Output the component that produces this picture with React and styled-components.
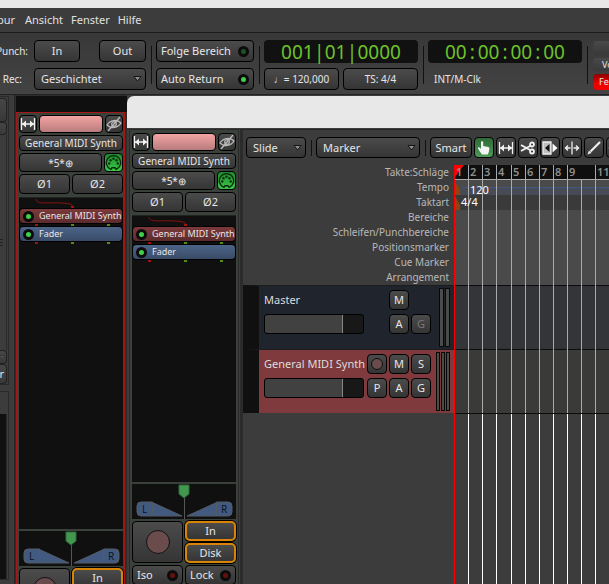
import React from "react";
import styled, { createGlobalStyle, css } from "styled-components";

const GlobalStyle = createGlobalStyle`
  * {
    box-sizing: border-box;
  }

  body {
    margin: 0;
    overflow: hidden;
    background: #3c3c3c;
    color: #e6e6e6;
    font-family: "Noto Sans", "Open Sans", sans-serif;
    font-size: 11px;
    line-height: 14px;
  }

  button,
  select {
    margin: 0;
    padding: 0;
    font: inherit;
    color: inherit;
  }
`;

const raised = css`
  border: 1px solid #000;
  border-radius: 4px;
  background: linear-gradient(#4c4b4c, #363536);
`;

const Screen = styled.div`
  position: relative;
  display: flex;
  flex-direction: column;
  height: 100vh;
  overflow: hidden;
`;

const TitleStrip = styled.div`
  flex: none;
  height: 8px;
  background: #e8e8e8;
`;

const MenuBar = styled.nav`
  flex: none;
  display: flex;
  gap: 8px;
  height: 25px;
  align-items: center;
  border-bottom: 1px solid #1c1c1c;
`;

const MenuItem = styled.a`
  color: #e0e0e0;
  text-decoration: none;
`;

const ClippedMenu = styled.div`
  display: flex;
  justify-content: flex-end;
  width: 17px;
  padding-right: 2px;
`;

const Transport = styled.header`
  flex: none;
  display: flex;
  gap: 4px;
  height: 62px;
  padding: 7px 0 4px;
  border-bottom: 1px solid #222;
  background: linear-gradient(#383838, #434343);
`;

const Stack = styled.div`
  flex: none;
  display: flex;
  flex-direction: column;
  justify-content: space-between;
  width: ${(p) => p.$width}px;
`;

const Line = styled.div`
  display: flex;
  justify-content: space-between;
  align-items: center;
  gap: 4px;
  height: 22px;
`;

const Caption = styled.div`
  display: flex;
  align-items: center;
  justify-content: flex-end;
  height: 22px;
  padding-right: ${(p) => p.$inset}px;
  font-size: 10px;
`;

const SourceLabel = styled.div`
  height: 22px;
  padding-left: 6px;
  font-size: 10px;
  line-height: 22px;
`;

const Divider = styled.div`
  flex: none;
  align-self: center;
  width: 1px;
  height: ${(p) => p.$height || 38}px;
  margin-left: 1px;
  background: #111;
`;

const Button = styled.button`
  ${raised}
  display: flex;
  align-items: center;
  justify-content: ${(p) => p.$justify || "center"};
  flex: ${(p) => (p.$width ? "none" : 1)};
  width: ${(p) => (p.$width ? `${p.$width}px` : "auto")};
  height: ${(p) => p.$height || 22}px;
  padding: 0 ${(p) => p.$pad || 0}px;
  overflow: hidden;
  white-space: nowrap;
  font-size: ${(p) => p.$size || 11}px;
  ${(p) =>
    p.$active &&
    css`
      background: linear-gradient(#2f6a38, #4b9a55);
    `}
  ${(p) =>
    p.$lit &&
    css`
      background: linear-gradient(#1f8a2c, #3cc84a);
    `}
  &:disabled {
    color: #777;
  }
`;

const SelectBox = styled.label`
  ${raised}
  position: relative;
  flex: none;
  display: block;
  width: ${(p) => (p.$width ? `${p.$width}px` : "100%")};
  height: ${(p) => p.$height || 22}px;

  select {
    display: block;
    width: 100%;
    height: 100%;
    padding: 0 6px;
    border: 0;
    appearance: none;
    background: transparent;
  }

  svg {
    position: absolute;
    right: 3px;
    top: 50%;
    margin-top: -3px;
    pointer-events: none;
  }
`;

const Led = styled.span`
  flex: none;
  width: 11px;
  height: 11px;
  border: 3px solid #0c0c0c;
  border-radius: 50%;
  background: ${(p) => p.$color};
`;

const Clock = styled.div`
  display: flex;
  align-items: center;
  justify-content: center;
  height: 23px;
  border-radius: 4px;
  background: #111;
  color: #6cc22c;
  font-size: 19px;
  line-height: 22px;
`;

const ClockMark = styled.span`
  width: 11px;
  text-align: center;
`;

const EdgeButtons = styled.div`
  flex: 1;
  display: flex;
  flex-direction: column;
  gap: 3px;
  padding: 1px 0 0 1px;
`;

const EdgeButton = styled.button`
  height: ${(p) => p.$height}px;
  padding-left: ${(p) => p.$inset}px;
  overflow: hidden;
  border: 0;
  border-radius: 4px 0 0 4px;
  background: ${(p) =>
    p.$alert
      ? "linear-gradient(#8d0000, #f00000 60%)"
      : "linear-gradient(#4a494a, #3a393a)"};
  text-align: left;
  font-size: 9px;
  line-height: ${(p) => p.$height}px;
`;

const Workspace = styled.main`
  flex: 1;
  display: flex;
  min-height: 0;
`;

const SidePanel = styled.aside`
  flex: none;
  display: flex;
  flex-direction: column;
  gap: 6px;
  width: 15px;
  padding: 1px 5px 4px 0;
  border-right: 1px solid #262626;
`;

const SideGroup = styled.div`
  flex: ${(p) => (p.$grow ? "1" : "none")};
  display: flex;
  flex-direction: column;
  height: ${(p) => (p.$grow ? "auto" : `${p.$height}px`)};
  padding: 1px 1px 0 0;
  border: 1px solid #2a2a2a;
  border-left: 0;
`;

const SideButton = styled.button`
  flex: none;
  display: flex;
  justify-content: flex-end;
  align-items: center;
  height: ${(p) => p.$height}px;
  padding-right: 2px;
  overflow: hidden;
  border: 1px solid #222;
  border-left: 0;
  border-radius: 0 4px 4px 0;
  background: linear-gradient(#464646, #393939);
`;

const SideFill = styled.div`
  flex: 1;
  display: flex;
  align-items: center;
  margin-top: ${(p) => p.$top || 0}px;
  border-right: 1px solid #2a2a2a;
  background: ${(p) => p.$color || "transparent"};
`;

const MixerPane = styled.section`
  flex: none;
  display: flex;
  flex-direction: column;
  width: 112px;
  margin-bottom: -47px;
  padding: 1px 0 0 1px;
  background: #2c2e2c;
`;

const MixerGap = styled.div`
  flex: none;
  height: 16px;
  background: #0f0f0f;
`;

const StripSlot = styled.div`
  flex: 1;
  display: flex;
  min-height: 0;
`;

const Strip = styled.article`
  flex: none;
  display: flex;
  flex-direction: column;
  gap: 2px;
  min-height: 0;
  width: ${(p) => (p.$selected ? 109 : 110)}px;
  padding: ${(p) => (p.$selected ? "2px 1px 0 2px" : "3px 2px 0")};
  border: 1px solid ${(p) => (p.$selected ? "#a51616" : "#2a2a2a")};
  border-bottom: 0;
  background: #3a403a;
`;

const StripRow = styled.div`
  flex: none;
  display: flex;
  gap: 2px;
`;

const StripColor = styled.div`
  flex: 1;
  border: 1px solid #000;
  border-radius: 4px;
  background: linear-gradient(#f4a3a3, #b87c7c);
`;

const Processors = styled.div`
  flex: 1;
  min-height: 0;
  margin-top: 1px;
  overflow: hidden;
  border-top: 1px solid #222;
  background: #101010;
`;

const Wire = styled.svg`
  display: block;
`;

const Processor = styled.div`
  display: flex;
  align-items: center;
  gap: 5px;
  height: 16px;
  padding-left: 3px;
  border: 1px solid #000;
  border-radius: 4px;
  background: ${(p) => p.$fill};
  white-space: nowrap;
  font-size: 9px;
`;

const Pins = styled.div`
  display: flex;
  justify-content: space-between;
  height: 2px;
  padding: 0 13px 0 16px;
`;

const Pin = styled.span`
  width: 3px;
  background: ${(p) => p.$color};
`;

const Panner = styled.svg`
  flex: none;
  display: block;
  background: #101010;
  font-size: 10px;
`;

const StripControls = styled.div`
  flex: none;
  display: grid;
  grid-template-columns: 51px 51px;
  gap: 2px;
  height: 63px;
`;

const RecordButton = styled.button`
  ${raised}
  grid-row: span 2;
  display: flex;
  align-items: center;
  justify-content: center;
  height: 42px;
`;

const RecordDot = styled.span`
  width: ${(p) => p.$size}px;
  height: ${(p) => p.$size}px;
  border: 1px solid #111;
  border-radius: 50%;
  background: #6a4c4d;
`;

const MonitorButton = styled.button`
  height: 20px;
  border: 2px solid #d98405;
  border-radius: 5px;
  box-shadow: 0 0 0 1px #000;
  background: linear-gradient(#4c4b4c, #363536);
`;

const EditorWindow = styled.section`
  position: absolute;
  top: 96px;
  right: 0;
  bottom: 0;
  left: 127px;
  display: flex;
  flex-direction: column;
  overflow: hidden;
  border-radius: 7px 0 0 0;
  background: #3c3c3c;
`;

const WindowTitle = styled.div`
  flex: none;
  height: 32px;
  background: #e8e8e8;
`;

const WindowBody = styled.div`
  flex: 1;
  display: flex;
  min-height: 0;
  padding: 1px 0 0 2px;
`;

const Editor = styled.div`
  flex: 1;
  display: flex;
  flex-direction: column;
  min-width: 0;
  margin-left: 1px;
  border-left: 3px solid #2b2b2b;
`;

const Tools = styled.div`
  flex: none;
  display: flex;
  gap: 2px;
  height: 36px;
  padding: 7px 0 7px 3px;
  border-top: 1px solid #262626;
`;

const ToolGap = styled.div`
  flex: none;
  display: flex;
  justify-content: center;
  width: 6px;
`;

const Timeline = styled.div`
  flex: 1;
  display: flex;
  min-height: 0;
`;

const HeaderColumn = styled.div`
  flex: none;
  width: 211px;
`;

const RulerLabel = styled.div`
  height: 15px;
  padding-right: 5px;
  text-align: right;
  color: #b8b8b8;
  font-size: 10px;
  line-height: 15px;
`;

const Track = styled.div`
  display: flex;
  height: 64px;
  padding: 4px 4px 0 5px;
  border-top: 1px solid #1c1c1c;
  border-left: 16px solid #101010;
  background: ${(p) => p.$color};
`;

const TrackBody = styled.div`
  flex: 1;
  display: flex;
  flex-direction: column;
  gap: 4px;
`;

const TrackRow = styled.div`
  display: flex;
  gap: 2px;
  height: 20px;
`;

const TrackName = styled.div`
  flex: none;
  width: 101px;
  color: #dcdcdc;
  line-height: 20px;
  white-space: nowrap;
`;

const TrackFader = styled.div`
  flex: none;
  width: 100px;
  margin-right: 1px;
  border: 1px solid #000;
  border-radius: 3px;
  background: linear-gradient(
    to right,
    #414141 77px,
    #888 77px,
    #888 78px,
    #181818 78px
  );
`;

const Blank = styled.span`
  width: 20px;
`;

const Meters = styled.div`
  display: flex;
  gap: 1px;
  height: 59px;
  margin-top: -2px;
`;

const Meter = styled.span`
  width: ${(p) => p.$width}px;
  border: 1px solid #080808;
  background: #4b4b48;
`;

const Canvas = styled.div`
  position: relative;
  flex: 1;
  min-width: 0;
  overflow: hidden;
  border-left: 1px solid #f00;
  background: #3c3c3c;
`;

const Lane = styled.div`
  height: ${(p) => p.$height}px;
  background: ${(p) => p.$color};
  border-top: ${(p) => (p.$ruled ? "1px solid #0c0c0c" : "0")};
`;

const TempoLane = styled(Lane)`
  padding: 7px 0 0 7px;

  &::after {
    content: "";
    display: block;
    height: 8px;
    border-top: 1px solid #43587d;
    background: #474b55;
  }
`;

const BarNumbers = styled.div`
  display: flex;
  height: 15px;
  border-bottom: 1px solid #aaa;
  background: #0f0f0f;
`;

const GridLines = styled.div`
  position: absolute;
  top: ${(p) => p.$top}px;
  bottom: ${(p) => (p.$height ? "auto" : 0)};
  height: ${(p) => (p.$height ? `${p.$height}px` : "auto")};
  display: flex;
`;

const Bar = styled.div`
  position: relative;
  z-index: 1;
  flex: none;
  width: 14px;
  padding-left: 1px;
  border-right: 1px solid ${(p) => p.$line};
  color: #8e8e8e;
  font-weight: 600;
  line-height: 14px;
  white-space: nowrap;

  &:nth-child(4) {
    width: 15px;
  }
`;

const Flag = styled.div`
  position: absolute;
  z-index: 2;
  top: ${(p) => p.$top}px;
  left: ${(p) => p.$left}px;
  color: #fff;
  line-height: 14px;
`;

const Marks = styled.svg`
  position: absolute;
  top: 0;
  left: 0;
`;

const Caret = () => (
  <svg width="9" height="6" viewBox="0 0 9 6" aria-hidden="true">
    <path d="M1 .5h7L4.500 5z" fill="#8b8b8b" stroke="#151515" />
  </svg>
);

const Grip = () => (
  <svg width="4" height="8" viewBox="0 0 4 8" aria-hidden="true">
    <path d="M0 .5h3M0 3.500h3M0 6.500h3" stroke="#222" />
  </svg>
);

const Icon = ({ children, size = 16 }) => (
  <svg
    width={size}
    height={size}
    viewBox="0 0 16 16"
    fill="none"
    stroke="#f0f0f0"
    strokeWidth="1.300"
    aria-hidden="true"
  >
    {children}
  </svg>
);

const RangeIcon = () => (
  <Icon>
    <path d="M1.500 2v12M14.500 2v12M2 8h12" />
    <path d="M6 4.500v7L2 8zM10 4.500v7l4-3.500z" fill="#f0f0f0" stroke="none" />
  </Icon>
);

const HiddenIcon = () => (
  <Icon>
    <path d="M1 9c3-5 10-6 14-2-3 5-10 6-14 2zM14 1L2 15" stroke="#bbb" />
    <circle cx="8" cy="8" r="2.300" stroke="#bbb" />
  </Icon>
);

const MidiIcon = () => (
  <Icon size={18}>
    <path
      d="M5.500 14A6.700 6.700 0 1 1 10.500 14L9.500 12.500h-3z"
      stroke="#092d0c"
    />
    <g fill="#092d0c" stroke="none">
      <circle cx="4" cy="8.500" r="1.100" />
      <circle cx="5.200" cy="5.400" r="1.100" />
      <circle cx="8" cy="4" r="1.100" />
      <circle cx="10.800" cy="5.400" r="1.100" />
      <circle cx="12" cy="8.500" r="1.100" />
    </g>
  </Icon>
);

const HandIcon = () => (
  <Icon>
    <path
      d="M5 2.200c0-1.300 2.200-1.300 2.200 0V6l5 1c1 .3 1.300 1 1.200 2l-.6 3-1 2.500H6L3.500 11 2 8.500C1.600 7.300 3 6.800 3.800 7.800L5 9z"
      fill="#f4f4f4"
      stroke="none"
    />
  </Icon>
);

const CutIcon = () => (
  <Icon>
    <path d="M1 5l9 5M1 11l9-5" strokeWidth="2" />
    <circle cx="12" cy="4.500" r="2" strokeWidth="1.800" />
    <circle cx="12" cy="11.500" r="2" strokeWidth="1.800" />
  </Icon>
);

const AuditionIcon = () => (
  <Icon>
    <path d="M1 2h8v12H1z" fill="#bebebe" stroke="#eee" />
    <path d="M7.500 4v8L3 8z" fill="#111" stroke="none" />
    <path d="M10.500 3.500l5 4.500-5 4.500z" fill="#fff" stroke="none" />
  </Icon>
);

const StretchIcon = () => (
  <Icon>
    <path d="M8 1.500v13M1 8h5.500M9.500 8H15M4 5.500L1.500 8 4 10.500M12 5.500L14.500 8 12 10.500" />
  </Icon>
);

const DrawIcon = () => (
  <Icon>
    <path d="M4.500 11.500l9.500-9.500" strokeWidth="2.200" />
    <path d="M1.500 14.500l1.500-4 2.500 2.500z" fill="#f0f0f0" stroke="none" />
  </Icon>
);

const Dropdown = ({ label, value, width, height }) => (
  <SelectBox $width={width} $height={height}>
    <select aria-label={label} defaultValue={value}>
      <option>{value}</option>
    </select>
    <Caret />
  </SelectBox>
);

const PinRow = () => (
  <Pins>
    <Pin $color="#9c1414" />
    <Pin $color="#549010" />
    <Pin $color="#549010" />
  </Pins>
);

const SquareButton = (props) => <Button $width={20} $height={20} {...props} />;

function MixerStrip({ selected }) {
  return (
    <Strip $selected={selected}>
      <StripRow>
        <Button $width={18} $height={18} aria-label="Breite">
          <RangeIcon />
        </Button>
        <StripColor />
        <Button $width={18} $height={18} aria-label="Ausblenden">
          <HiddenIcon />
        </Button>
      </StripRow>
      <StripRow>
        <Button $height={16} $size={10}>
          General MIDI Synth
        </Button>
      </StripRow>
      <StripRow>
        <Button $height={19} $size={10}>
          *5*⊕
        </Button>
        <Button $width={19} $height={19} $lit aria-label="MIDI">
          <MidiIcon />
        </Button>
      </StripRow>
      <StripRow>
        <Button $height={20}>Ø1</Button>
        <Button $height={20}>Ø2</Button>
      </StripRow>
      <Processors>
        <Wire width="104" height="10" aria-hidden="true">
          <path
            d="M17 1C17 7 29 4 42 5q12 0 12 4"
            fill="none"
            stroke="#8c1010"
          />
          <path d="M52 8h3v2h-3z" fill="#9c1414" />
        </Wire>
        <Processor $fill="linear-gradient(#7c393b, #5c2b2d)">
          <Led $color="#3fd04b" />
          General MIDI Synth
        </Processor>
        <PinRow />
        <Processor $fill="linear-gradient(#4c6488, #394b67)">
          <Led $color="#3fd04b" />
          Fader
        </Processor>
        <PinRow />
      </Processors>
      <Panner width="104" height="35" viewBox="0 0 104 35">
        <g fill="#425a80" stroke="#555b62">
          <path d="M20.500 18v14H9q-4 0-4-4v-6q0-4 4-4zM20.500 18.500L50 32H20.500z" />
          <path d="M84.500 18v14H96q4 0 4-4v-6q0-4-4-4zM84.500 18.500L55 32H84.500z" />
        </g>
        <path d="M52.500 10v25" stroke="#555" />
        <path d="M47 1h10v9l-5 4-5-4z" fill="#43984f" stroke="#2d6a37" />
        <text x="10" y="29" fill="#0d1420">
          L
        </text>
        <text x="89" y="29" fill="#0d1420">
          R
        </text>
      </Panner>
      <StripControls>
        <RecordButton aria-label="Aufnahme">
          <RecordDot $size={24} />
        </RecordButton>
        <MonitorButton>In</MonitorButton>
        <MonitorButton>Disk</MonitorButton>
        <Button $height={20} $pad={4} $justify="space-between">
          Iso
          <Led $color="#651010" />
        </Button>
        <Button $height={20} $pad={4} $justify="space-between">
          Lock
          <Led $color="#651010" />
        </Button>
      </StripControls>
    </Strip>
  );
}

const rulers = [
  "Takte:Schläge",
  "Tempo",
  "Taktart",
  "Bereiche",
  "Schleifen/Punchbereiche",
  "Positionsmarker",
  "Cue Marker",
  "Arrangement",
];

// bar 10 has neither a number nor a tick in the ruler
const bars = [
  { label: "1", tick: true },
  { label: "2", tick: true },
  { label: "3", tick: true },
  { label: "4", tick: true },
  { label: "5", tick: true },
  { label: "6", tick: true },
  { label: "7", tick: true },
  { label: "8", tick: true },
  { label: "9", tick: false },
  { label: "", tick: true },
  { label: "11", tick: true },
];

const tools = [
  ["Greifen", HandIcon],
  ["Bereich", RangeIcon],
  ["Schneiden", CutIcon],
  ["Vorhören", AuditionIcon],
  ["Dehnen", StretchIcon],
  ["Zeichnen", DrawIcon],
  ["Bearbeiten", StretchIcon],
];

function TransportBar() {
  return (
    <Transport>
      <Stack $width={30}>
        <Caption $inset={2}>Punch:</Caption>
        <Caption $inset={8}>Rec:</Caption>
      </Stack>
      <Stack $width={112}>
        <Line>
          <Button $width={46}>In</Button>
          <Button $width={47}>Out</Button>
        </Line>
        <Dropdown label="Rec" value="Geschichtet" />
      </Stack>
      <Divider />
      <Stack $width={98}>
        <Line>
          <Button $pad={4} $justify="space-between">
            <span>Folge Bereich</span>
            <Led $color="#1c5222" />
          </Button>
        </Line>
        <Line>
          <Button $pad={4} $justify="space-between">
            <span>Auto Return</span>
            <Led $color="#3fd04b" />
          </Button>
        </Line>
      </Stack>
      <Divider />
      <Stack $width={154}>
        <Clock>
          001<ClockMark>|</ClockMark>01<ClockMark>|</ClockMark>0000
        </Clock>
        <Line>
          <Button $size={10}>♩= 120,000</Button>
          <Button $size={10}>TS: 4/4</Button>
        </Line>
      </Stack>
      <Divider />
      <Stack $width={154}>
        <Clock>
          00<ClockMark>:</ClockMark>00<ClockMark>:</ClockMark>00
          <ClockMark>:</ClockMark>00
        </Clock>
        <SourceLabel>INT/M-Clk</SourceLabel>
      </Stack>
      <Divider />
      <EdgeButtons>
        <EdgeButton $height={14} $inset={9} aria-label="Solo" />
        <EdgeButton $height={14} $inset={9}>
          Vo
        </EdgeButton>
        <EdgeButton $height={16} $inset={6} $alert>
          Fe
        </EdgeButton>
      </EdgeButtons>
    </Transport>
  );
}

function TrackHeaders() {
  return (
    <HeaderColumn>
      {rulers.map((name) => (
        <RulerLabel key={name}>{name}</RulerLabel>
      ))}
      <Track $color="#20242c">
        <TrackBody>
          <TrackRow>
            <TrackName>Master</TrackName>
            <Blank />
            <SquareButton>M</SquareButton>
          </TrackRow>
          <TrackRow>
            <TrackFader />
            <Blank />
            <SquareButton>A</SquareButton>
            <SquareButton disabled>G</SquareButton>
          </TrackRow>
        </TrackBody>
        <Meters>
          <Meter $width={5} />
          <Meter $width={5} />
        </Meters>
      </Track>
      <Track $color="#7e3a3c">
        <TrackBody>
          <TrackRow>
            <TrackName>General MIDI Synth</TrackName>
            <SquareButton aria-label="Aufnahme">
              <RecordDot $size={12} />
            </SquareButton>
            <SquareButton>M</SquareButton>
            <SquareButton>S</SquareButton>
          </TrackRow>
          <TrackRow>
            <TrackFader />
            <SquareButton>P</SquareButton>
            <SquareButton>A</SquareButton>
            <SquareButton>G</SquareButton>
          </TrackRow>
        </TrackBody>
        <Meters>
          <Meter $width={4} />
          <Meter $width={4} />
          <Meter $width={4} />
        </Meters>
      </Track>
    </HeaderColumn>
  );
}

function TimelineCanvas() {
  return (
    <Canvas>
      <BarNumbers>
        {bars.map((bar, i) => (
          <Bar key={i} $line={bar.tick ? "#aaa" : "transparent"}>
            {bar.label}
          </Bar>
        ))}
      </BarNumbers>
      <TempoLane $height={15} $color="#4a4a4a" />
      <Lane $height={15} $color="#3a3a3a" />
      <Lane $height={75} $color="#4a4a4a" />
      <Lane $height={64} $color="#343538" $ruled />
      <Lane $height={64} $color="#3a3a38" $ruled />
      <Lane $height={1} $color="#0c0c0c" />
      <GridLines $top={15} $height={233}>
        {bars.map((bar, i) => (
          <Bar key={i} $line="#aaa" />
        ))}
      </GridLines>
      <GridLines $top={249}>
        {bars.map((bar, i) => (
          <Bar key={i} $line="#fff" />
        ))}
      </GridLines>
      <Marks width="12" height="46" aria-hidden="true">
        <path d="M0 0h9L0 12z" fill="#f00" />
        <path d="M0 16l5 9v5H0zM0 31l5 9v5H0z" fill="#91420d" />
      </Marks>
      <Flag $top={18} $left={15}>
        120
      </Flag>
      <Flag $top={30} $left={6}>
        4/4
      </Flag>
    </Canvas>
  );
}

export default function App() {
  return (
    <Screen>
      <GlobalStyle />
      <TitleStrip />
      <MenuBar>
        <ClippedMenu>
          <MenuItem href="#spur">Spur</MenuItem>
        </ClippedMenu>
        <MenuItem href="#ansicht">Ansicht</MenuItem>
        <MenuItem href="#fenster">Fenster</MenuItem>
        <MenuItem href="#hilfe">Hilfe</MenuItem>
      </MenuBar>
      <TransportBar />
      <Workspace>
        <SidePanel>
          <SideGroup $height={289}>
            <SideButton $height={24} aria-label="Auswahl" />
            <SideButton $height={13} aria-label="Aufklappen" />
            <SideFill>
              <Grip />
            </SideFill>
            <SideButton $height={14} aria-label="Menü">
              <Caret />
            </SideButton>
            <SideButton $height={20}>r</SideButton>
          </SideGroup>
          <SideGroup $grow>
            <SideFill $top={21} $color="#101010" />
          </SideGroup>
        </SidePanel>
        <MixerPane>
          <MixerGap />
          <StripSlot>
            <MixerStrip selected />
          </StripSlot>
        </MixerPane>
      </Workspace>
      <EditorWindow>
        <WindowTitle />
        <WindowBody>
          <MixerStrip />
          <Editor>
            <Tools>
              <Dropdown label="Modus" value="Slide" width={60} height={21} />
              <ToolGap>
                <Divider $height={16} />
              </ToolGap>
              <Dropdown label="Raster" value="Marker" width={104} height={21} />
              <ToolGap>
                <Divider $height={16} />
              </ToolGap>
              <Button $width={42} $height={21}>
                Smart
              </Button>
              {tools.map(([name, ToolIcon], i) => (
                <Button
                  key={name}
                  $width={20}
                  $height={21}
                  $active={i === 0}
                  aria-label={name}
                >
                  <ToolIcon />
                </Button>
              ))}
            </Tools>
            <Timeline>
              <TrackHeaders />
              <TimelineCanvas />
            </Timeline>
          </Editor>
        </WindowBody>
      </EditorWindow>
    </Screen>
  );
}
